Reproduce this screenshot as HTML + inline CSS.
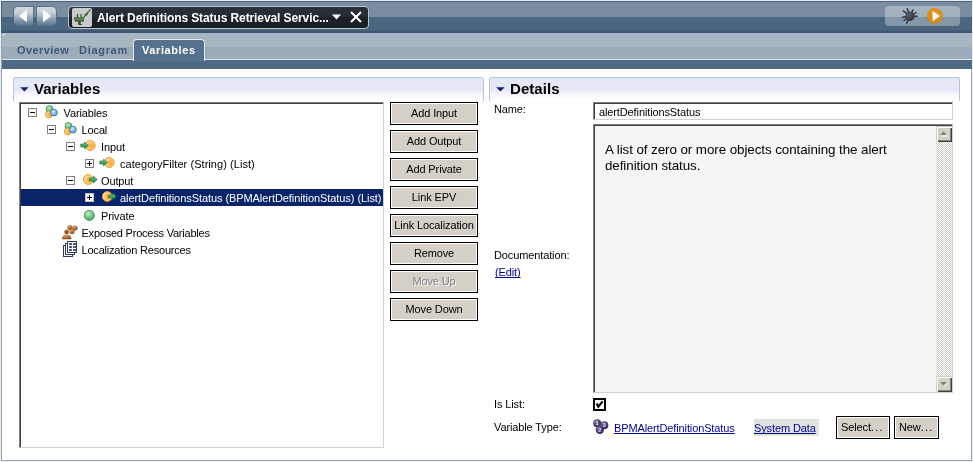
<!DOCTYPE html>
<html><head><meta charset="utf-8">
<style>
*{margin:0;padding:0;box-sizing:border-box}
html,body{width:973px;height:462px;overflow:hidden;background:#fff}
body{position:relative;will-change:transform;font-family:"Liberation Sans",sans-serif;font-size:11px;color:#000}
.a{position:absolute}
*{text-decoration-skip-ink:none}
.t{position:absolute;white-space:nowrap;line-height:13px;letter-spacing:-0.12px}
.btn{position:absolute;width:88px;height:23px;border:1px solid #000;background:#d4d0c8;box-shadow:inset 1px 1px 0 #fff,inset -1px -1px 0 #fff}
.btn span{position:absolute;left:0;right:0;top:4px;text-align:center;white-space:nowrap;line-height:13px;letter-spacing:-0.12px}
.box{position:absolute;width:9px;height:9px;border:1px solid #808080;background:#fff}
.box i{position:absolute;left:1px;top:3px;width:5px;height:1px;background:#000}
.box b{position:absolute;left:3px;top:1px;width:1px;height:5px;background:#000}
</style></head><body>
<!-- outer frame -->
<div class="a" style="left:0;top:0;width:973px;height:462px;background:#e9edf2"></div>
<div class="a" style="left:1px;top:1px;width:971px;height:460px;background:#9aa6b4"></div>
<div class="a" style="left:2px;top:2px;width:969px;height:458px;background:#fff"></div>

<!-- header -->
<div class="a" style="left:1px;top:1px;width:971px;height:1px;background:#4a6580"></div>
<div class="a" style="left:1px;top:1px;width:1px;height:32px;background:#4a6580"></div>
<div class="a" style="left:2px;top:2px;width:970px;height:15px;background:#7a8da0"></div>
<div class="a" style="left:2px;top:17px;width:970px;height:13px;background:#4b6680"></div>
<div class="a" style="left:2px;top:30px;width:970px;height:1px;background:#46607a"></div>
<div class="a" style="left:2px;top:31px;width:970px;height:2px;background:#3f5772"></div>
<!-- tab bar -->
<div class="a" style="left:2px;top:33px;width:970px;height:14px;background:#a8b6c4"></div>
<div class="a" style="left:2px;top:47px;width:970px;height:12px;background:#9cabb9"></div>
<div class="a" style="left:2px;top:59px;width:970px;height:1px;background:#dde4ea"></div>
<div class="a" style="left:2px;top:60px;width:970px;height:9px;background:#4f6a86"></div>
<div class="a" style="left:3px;top:34px;width:2px;height:1px;background:#e8eef4"></div>
<div class="a" style="left:3px;top:34px;width:1px;height:2px;background:#e8eef4"></div>

<!-- nav buttons -->
<svg class="a" style="left:12px;top:5px" width="48" height="23" viewBox="0 0 48 23">
<defs><linearGradient id="ng" x1="0" y1="0" x2="0" y2="1">
<stop offset="0" stop-color="#d2d8e0"/><stop offset="0.3" stop-color="#c8d0da"/><stop offset="0.65" stop-color="#8c9eb1"/><stop offset="1" stop-color="#536d87"/></linearGradient></defs>
<path d="M6.5 1.5 H21.5 V21.5 H6.5 Q1.5 21.5 1.5 16.5 V6.5 Q1.5 1.5 6.5 1.5Z" fill="url(#ng)" stroke="#4a6178" stroke-width="0.8"/>
<path d="M24.5 1.5 H39.5 Q44.5 1.5 44.5 6.5 V16.5 Q44.5 21.5 39.5 21.5 H24.5Z" fill="url(#ng)" stroke="#4a6178" stroke-width="0.8"/>
<path d="M7 11 L15 4.8 V17.2Z" fill="#fff"/>
<path d="M39.2 11 L31 4.8 V17.2Z" fill="#fff"/>
</svg>
<!-- title pill -->
<div class="a" style="left:68px;top:6px;width:301px;height:23px;border:1px solid #b9c3ce;border-radius:4px;background:linear-gradient(#2a3039 0,#262c34 50%,#1c2128 50%,#1b2027 100%)"></div>
<div class="a" style="left:72px;top:8px;width:20px;height:19px;border-radius:2px;background:#c9cbce"></div>
<svg class="a" style="left:72px;top:8px" width="20" height="19" viewBox="0 0 20 19">
<path d="M11 10.5 L13 7.5 L14.5 6.8 L15.2 4.8 L16.8 3.6 L18 1.8" stroke="#52744a" stroke-width="1.5" fill="none" stroke-linecap="round"/>
<path d="M12.6 6.2 L15.6 4.6 L15.2 7.6Z" fill="#3f5a36"/>
<circle cx="11.8" cy="9.6" r="0.9" fill="#58c060"/>
<path d="M2 9.2 L11.8 9.2 L12 13.8 L2.8 13.8 L2.4 11.6 L1.8 11.2Z" fill="#4a6240"/>
<rect x="3" y="10.5" width="8" height="1.3" fill="#6a8660"/>
<rect x="4.8" y="6" width="1.4" height="3.4" fill="#3c5234"/>
<rect x="8.2" y="6" width="1.5" height="3.4" fill="#52704a"/>
<path d="M6 13.6 H8.6 V15.8 L10.4 16.4 V17 H6.4Z" fill="#33462c"/>
</svg>
<div class="t" style="left:97px;top:11px;color:#fff;font-weight:bold;font-size:12px;letter-spacing:-0.1px;line-height:14px">Alert Definitions Status Retrieval Servic...</div>
<svg class="a" style="left:331px;top:13px" width="11" height="8" viewBox="0 0 11 8"><path d="M1 1.5 H10 L5.5 6.5Z" fill="#fff"/></svg>
<svg class="a" style="left:349px;top:10px" width="14" height="14" viewBox="0 0 14 14"><path d="M2 2 L12 12 M12 2 L2 12" stroke="#fff" stroke-width="2"/></svg>
<!-- toolbar pill -->
<div class="a" style="left:885px;top:6px;width:75px;height:20px;border-radius:4px;background:rgba(255,255,255,0.32)"></div>
<svg class="a" style="left:900px;top:6px" width="20" height="20" viewBox="0 0 20 20">
<defs><radialGradient id="bugg" cx="0.4" cy="0.35" r="0.7"><stop offset="0" stop-color="#56606c"/><stop offset="1" stop-color="#252d36"/></radialGradient></defs>
<g stroke="#333c47" stroke-width="1.5" stroke-linecap="round">
<path d="M9.9 9.9 L7.2 2.6 M9.9 9.9 L3.3 4.9 M9.9 9.9 L2.4 11.2 M9.9 9.9 L4.1 14.5 M9.9 9.9 L6.7 17.3 M9.9 9.9 L13 3.8 M9.9 9.9 L16.1 6.7 M9.9 9.9 L17.3 10.3"/>
</g>
<ellipse cx="10" cy="10.2" rx="4.6" ry="4.8" fill="url(#bugg)"/>
</svg>
<svg class="a" style="left:926px;top:7px" width="18" height="18" viewBox="0 0 18 18">
<defs><radialGradient id="og" cx="0.55" cy="0.4" r="0.7"><stop offset="0" stop-color="#e49c28"/><stop offset="0.8" stop-color="#d4861a"/><stop offset="1" stop-color="#a86814"/></radialGradient></defs>
<circle cx="8.9" cy="8.9" r="7.9" fill="url(#og)"/>
<path d="M6.5 4 L13.9 9.1 L6.8 14.3Z" fill="#fff"/>
</svg>
<!-- tabs -->
<div class="t" style="left:17px;top:44px;color:#3d5a77;font-weight:bold;font-size:11px;letter-spacing:0.4px">Overview</div>
<div class="t" style="left:79px;top:44px;color:#3d5a77;font-weight:bold;font-size:11px;letter-spacing:0.7px">Diagram</div>
<div class="a" style="left:133px;top:39px;width:72px;height:22px;border:1px solid #e2e8ee;border-bottom:none;border-radius:4px 4px 0 0;background:#55718d"></div>
<div class="a" style="left:134px;top:59px;width:70px;height:2px;background:#55718d"></div>
<div class="t" style="left:142px;top:44px;color:#fff;font-weight:bold;font-size:11px;letter-spacing:0.6px">Variables</div>


<!-- Variables section header -->
<div class="a" style="left:13px;top:77px;width:471px;height:24px;border:1px solid #b8c3dd;border-bottom:none;border-radius:3px 3px 0 0;background:linear-gradient(#e4e9f5 0,#e5e9f6 13px,#f0f1fa 14px,#fbfbfe 19px,#fff 21px)"></div>
<svg class="a" style="left:19px;top:86px" width="11" height="7" viewBox="0 0 11 7"><path d="M1.2 1.3 H9.6 L5.4 5.6Z" fill="#0f1f6e"/></svg>
<div class="t" style="left:34px;top:80px;font-weight:bold;font-size:15px;line-height:17px;letter-spacing:0.05px">Variables</div>

<!-- tree box -->
<div class="a" style="left:19px;top:102px;width:365px;height:346px;border-top:1px solid #808080;border-left:1px solid #808080;border-right:1px solid #d4d0c8;border-bottom:1px solid #d4d0c8"></div>
<div class="a" style="left:20px;top:103px;width:363px;height:344px;border-top:1px solid #404040;border-left:1px solid #404040"></div>


<!-- tree rows -->
<svg width="0" height="0" style="position:absolute"><defs>
<radialGradient id="gor" cx="0.6" cy="0.55" r="0.65"><stop offset="0" stop-color="#f4a420"/><stop offset="0.45" stop-color="#f8c468"/><stop offset="0.85" stop-color="#fde2ac"/><stop offset="1" stop-color="#f6c070"/></radialGradient>
<radialGradient id="ggr" cx="0.4" cy="0.3" r="0.8"><stop offset="0" stop-color="#c8e8c8"/><stop offset="0.6" stop-color="#6cbf80"/><stop offset="1" stop-color="#3a9a58"/></radialGradient>
<radialGradient id="gbl" cx="0.4" cy="0.35" r="0.8"><stop offset="0" stop-color="#d8ecfa"/><stop offset="0.6" stop-color="#7ab0dc"/><stop offset="1" stop-color="#3c7ac0"/></radialGradient>
<linearGradient id="garr" x1="0" y1="0" x2="0" y2="1"><stop offset="0" stop-color="#90d0a0"/><stop offset="0.5" stop-color="#4aa868"/><stop offset="1" stop-color="#1e7a40"/></linearGradient>
<radialGradient id="gbr" cx="0.4" cy="0.3" r="0.8"><stop offset="0" stop-color="#d8a070"/><stop offset="1" stop-color="#7a3e10"/></radialGradient>
<radialGradient id="gpu" cx="0.35" cy="0.3" r="0.8"><stop offset="0" stop-color="#7a6c9c"/><stop offset="1" stop-color="#261d44"/></radialGradient>
</defs></svg>
<div class="a" style="left:21px;top:189px;width:362px;height:17px;background:#0a246a"></div>
<div class="box" style="left:28px;top:108px"><i></i></div>
<svg class="a" style="left:45px;top:105px" width="14" height="14" viewBox="0 0 14 14">
<circle cx="4.5" cy="4" r="3.4" fill="url(#ggr)" stroke="#3a9050" stroke-width="0.8"/>
<circle cx="3.8" cy="9.5" r="3.4" fill="url(#gor)" stroke="#d08a20" stroke-width="0.8"/>
<circle cx="8.9" cy="7.6" r="3.4" fill="url(#gbl)" stroke="#2e6ab0" stroke-width="0.8"/>
</svg>
<div class="t" style="left:63.5px;top:107px;color:#000">Variables</div>
<div class="box" style="left:47px;top:125px"><i></i></div>
<svg class="a" style="left:64px;top:122px" width="14" height="14" viewBox="0 0 14 14">
<circle cx="4.5" cy="4" r="3.4" fill="url(#ggr)" stroke="#3a9050" stroke-width="0.8"/>
<circle cx="3.8" cy="9.5" r="3.4" fill="url(#gor)" stroke="#d08a20" stroke-width="0.8"/>
<circle cx="8.9" cy="7.6" r="3.4" fill="url(#gbl)" stroke="#2e6ab0" stroke-width="0.8"/>
</svg>
<div class="t" style="left:81.5px;top:124px;color:#000">Local</div>
<div class="box" style="left:66px;top:142px"><i></i></div>
<svg class="a" style="left:80px;top:140px" width="16" height="12" viewBox="0 0 16 12">
<circle cx="10.2" cy="5.5" r="4.9" fill="url(#gor)" stroke="#e39420" stroke-width="1"/>
<path d="M0.8 4 H4.5 V2.2 L8.4 5.5 L4.5 8.8 V7 H0.8Z" fill="url(#garr)" stroke="#1f7040" stroke-width="0.7"/>
</svg>
<div class="t" style="left:101px;top:141px;color:#000">Input</div>
<div class="box" style="left:85px;top:159px"><i></i><b></b></div>
<svg class="a" style="left:99px;top:157px" width="16" height="12" viewBox="0 0 16 12">
<circle cx="10.2" cy="5.5" r="4.9" fill="url(#gor)" stroke="#e39420" stroke-width="1"/>
<path d="M0.8 4 H4.5 V2.2 L8.4 5.5 L4.5 8.8 V7 H0.8Z" fill="url(#garr)" stroke="#1f7040" stroke-width="0.7"/>
</svg>
<div class="t" style="left:120px;top:158px;color:#000;letter-spacing:0.05px">categoryFilter (String) (List)</div>
<div class="box" style="left:66px;top:176px"><i></i></div>
<svg class="a" style="left:83px;top:174px" width="16" height="12" viewBox="0 0 16 12">
<circle cx="5.2" cy="5.5" r="4.9" fill="url(#gor)" stroke="#e39420" stroke-width="1"/>
<path d="M6.5 4 H10.5 V2.2 L14.2 5.5 L10.5 8.8 V7 H6.5Z" fill="url(#garr)" stroke="#1f7040" stroke-width="0.7"/>
</svg>
<div class="t" style="left:101px;top:175px;color:#000">Output</div>
<div class="box" style="left:85px;top:193px;border-color:#c0c0c0"><i></i><b></b></div>
<svg class="a" style="left:102px;top:191px" width="16" height="12" viewBox="0 0 16 12">
<circle cx="5.2" cy="5.5" r="4.9" fill="url(#gor)" stroke="#e39420" stroke-width="1"/>
<path d="M6.5 4 H10.5 V2.2 L14.2 5.5 L10.5 8.8 V7 H6.5Z" fill="url(#garr)" stroke="#1f7040" stroke-width="0.7"/>
</svg>
<div class="t" style="left:120px;top:192px;color:#fff;letter-spacing:-0.07px">alertDefinitionsStatus (BPMAlertDefinitionStatus) (List)</div>
<svg class="a" style="left:83px;top:209px" width="13" height="13" viewBox="0 0 13 13"><circle cx="6.3" cy="6.4" r="5" fill="url(#ggr)" stroke="#2f8a50" stroke-width="0.9"/></svg>
<div class="t" style="left:101px;top:210px;color:#000">Private</div>
<svg class="a" style="left:61px;top:223px" width="18" height="17" viewBox="0 0 18 17">
<circle cx="9" cy="4.5" r="2.6" fill="url(#gbr)"/><circle cx="14" cy="5" r="2.6" fill="url(#gbr)"/><circle cx="11" cy="8.5" r="2.6" fill="url(#gbr)"/>
<circle cx="5.6" cy="9" r="2.3" fill="#9a5420"/>
<path d="M1 16.2 Q1 11.5 5.6 11.5 Q10.2 11.5 10.5 16.2Z" fill="url(#gbr)"/>
</svg>
<div class="t" style="left:81.5px;top:227px;color:#000;letter-spacing:-0.22px">Exposed Process Variables</div>
<svg class="a" style="left:62px;top:240px" width="16" height="17" viewBox="0 0 16 17">
<rect x="1.5" y="5.5" width="9" height="11" fill="#fff" stroke="#2a3c5c"/>
<rect x="3.5" y="3.5" width="9" height="11" fill="#fff" stroke="#2a3c5c"/>
<rect x="5.5" y="1.5" width="9" height="11" fill="#fff" stroke="#2a3c5c"/>
<g fill="#4a5a78"><rect x="7" y="3" width="3" height="2"/><rect x="11" y="3" width="3" height="2"/><rect x="7" y="6" width="3" height="2"/><rect x="11" y="6" width="3" height="2"/><rect x="7" y="9" width="3" height="2"/><rect x="11" y="9" width="3" height="2"/></g>
</svg>
<div class="t" style="left:81.5px;top:244px;color:#000;letter-spacing:-0.2px">Localization Resources</div>

<!-- buttons -->
<div class="btn" style="left:390px;top:102px"><span>Add Input</span></div>
<div class="btn" style="left:390px;top:130px"><span>Add Output</span></div>
<div class="btn" style="left:390px;top:158px"><span>Add Private</span></div>
<div class="btn" style="left:390px;top:186px"><span>Link EPV</span></div>
<div class="btn" style="left:390px;top:214px"><span>Link Localization</span></div>
<div class="btn" style="left:390px;top:242px"><span>Remove</span></div>
<div class="btn" style="left:390px;top:270px"><span style="color:#808080;text-shadow:1px 1px 0 #fff">Move Up</span></div>
<div class="btn" style="left:390px;top:298px"><span>Move Down</span></div>


<!-- Details section header -->
<div class="a" style="left:489px;top:77px;width:471px;height:24px;border:1px solid #b8c3dd;border-bottom:none;border-radius:3px 3px 0 0;background:linear-gradient(#e4e9f5 0,#e5e9f6 13px,#f0f1fa 14px,#fbfbfe 19px,#fff 21px)"></div>
<svg class="a" style="left:495px;top:86px" width="11" height="7" viewBox="0 0 11 7"><path d="M1.2 1.3 H9.6 L5.4 5.6Z" fill="#0f1f6e"/></svg>
<div class="t" style="left:510px;top:80px;font-weight:bold;font-size:15px;line-height:17px;letter-spacing:0.05px">Details</div>

<div class="t" style="left:494px;top:103px">Name:</div>
<div class="a" style="left:593px;top:102px;width:360px;height:18px;border-top:1px solid #808080;border-left:1px solid #808080;border-right:1px solid #d4d0c8;border-bottom:1px solid #d4d0c8;background:#fff"></div>
<div class="a" style="left:594px;top:103px;width:358px;height:16px;border-top:1px solid #404040;border-left:1px solid #404040"></div>
<div class="t" style="left:599px;top:106px">alertDefinitionsStatus</div>

<!-- documentation -->
<div class="a" style="left:593px;top:124px;width:360px;height:269px;border-top:1px solid #808080;border-left:1px solid #808080;border-right:1px solid #d4d0c8;border-bottom:1px solid #d4d0c8;background:#f5f5f5"></div>
<div class="a" style="left:594px;top:125px;width:358px;height:267px;border-top:1px solid #404040;border-left:1px solid #404040"></div>
<div class="a" style="left:936px;top:142px;width:16px;height:234px;background-color:#fff;background-image:repeating-conic-gradient(#d4d0c8 0 25%,#fff 0 50%);background-size:2px 2px"></div>
<div class="a" style="left:936px;top:126px;width:16px;height:16px;background:#d4d0c8;box-shadow:inset 1px 1px 0 #d4d0c8,inset 2px 2px 0 #fff,inset -1px -1px 0 #404040,inset -2px -2px 0 #808080"></div>
<svg class="a" style="left:936px;top:126px" width="16" height="16" viewBox="0 0 16 16"><path d="M4 9 H11 L7.5 5.5Z" fill="#808080"/><path d="M5 10 H12" stroke="#fff" stroke-width="1"/></svg>
<div class="a" style="left:936px;top:376px;width:16px;height:16px;background:#d4d0c8;box-shadow:inset 1px 1px 0 #d4d0c8,inset 2px 2px 0 #fff,inset -1px -1px 0 #404040,inset -2px -2px 0 #808080"></div>
<svg class="a" style="left:936px;top:376px" width="16" height="16" viewBox="0 0 16 16"><path d="M4 6 H11 L7.5 9.5Z" fill="#808080"/><path d="M8 10.5 L11.5 7" stroke="#fff" stroke-width="1"/></svg>
<div class="a" style="left:605px;top:142px;width:330px;font-size:13.4px;line-height:16px;white-space:normal;letter-spacing:-0.08px">A list of zero or more objects containing the alert<br>definition status.</div>

<div class="t" style="left:494px;top:249px">Documentation:</div>
<div class="t" style="left:495px;top:266px;color:#000090;text-decoration:underline">(Edit)</div>

<div class="t" style="left:494px;top:398px">Is List:</div>
<div class="a" style="left:593px;top:398px;width:13px;height:13px;border:2px solid #000;background:#fff"></div>
<svg class="a" style="left:593px;top:398px" width="13" height="13" viewBox="0 0 13 13"><path d="M3.6 5.6 L5.4 8.6 L9.6 3.4" stroke="#000" stroke-width="2.2" fill="none"/></svg>

<div class="t" style="left:494px;top:421px">Variable Type:</div>
<svg class="a" style="left:592px;top:418px" width="18" height="17" viewBox="0 0 18 17">
<circle cx="5.2" cy="5.2" r="4" fill="url(#gpu)"/><circle cx="12.3" cy="7.2" r="4" fill="url(#gpu)"/><circle cx="7.8" cy="11.8" r="4.2" fill="url(#gpu)"/>
<text x="5" y="7.4" font-size="5.5" font-weight="bold" fill="#fff" text-anchor="middle" font-family="Liberation Sans">1</text>
<text x="12.4" y="9.4" font-size="5.5" font-weight="bold" fill="#e0e0f0" text-anchor="middle" font-family="Liberation Sans">3</text>
<text x="7.8" y="14" font-size="5.5" font-weight="bold" fill="#e0e0f0" text-anchor="middle" font-family="Liberation Sans">2</text>
</svg>
<div class="t" style="left:614px;top:422px;color:#000090;text-decoration:underline">BPMAlertDefinitionStatus</div>
<div class="a" style="left:754px;top:419px;width:65px;height:17px;background:#dfe4de"></div>
<div class="t" style="left:754px;top:422px;color:#000090;text-decoration:underline">System Data</div>
<div class="btn" style="left:836px;top:416px;width:54px"><span style="text-align:left;left:4px">Select<span style="position:static;letter-spacing:1.3px">...</span></span></div>
<div class="btn" style="left:894px;top:416px;width:45px"><span style="text-align:left;left:4px">New<span style="position:static;letter-spacing:1.3px">...</span></span></div>

</body></html>
